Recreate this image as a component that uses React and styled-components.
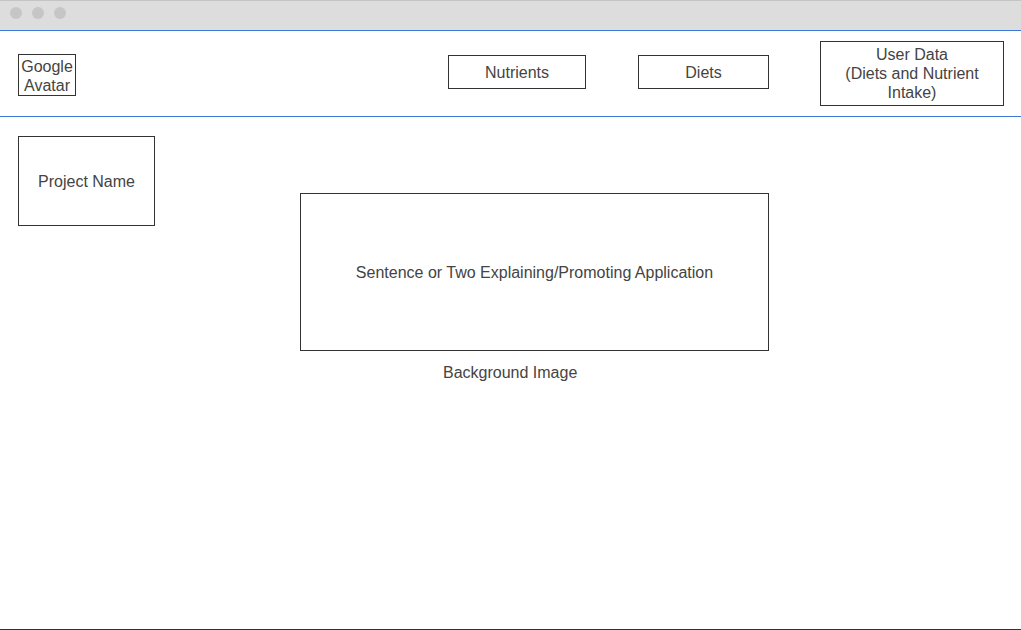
import React from "react";
import styled, { createGlobalStyle } from "styled-components";

const Global = createGlobalStyle`
  html, body { margin: 0; padding: 0; background: #ffffff; }
  * { box-sizing: border-box; }
`;

const Page = styled.div`
  width: 1021px;
  height: 630px;
  display: flex;
  flex-direction: column;
  border-bottom: 1px solid #333333;
  font-family: "Liberation Sans", Arial, sans-serif;
  font-size: 16px;
  line-height: 19px;
  color: #444444;
  background: #ffffff;
  overflow: hidden;
`;

const TitleBar = styled.div`
  height: 31px;
  flex: none;
  display: flex;
  align-items: flex-start;
  gap: 10px;
  padding: 6px 0 0 10px;
  background: #dddddd;
  border-top: 1px solid #c4c4c4;
  border-bottom: 1px solid #3c78d8;
`;

const Dot = styled.span`
  width: 12px;
  height: 12px;
  border-radius: 50%;
  background: #c6c6c6;
`;

const Header = styled.header`
  height: 86px;
  flex: none;
  display: flex;
  align-items: flex-start;
  padding: 0 17px 0 18px;
  border-bottom: 1px solid #3c78d8;
`;

const Nav = styled.nav`
  margin-left: auto;
  display: flex;
  align-items: flex-start;
`;

const Box = styled.div`
  width: ${(p) => p.$w}px;
  height: ${(p) => p.$h}px;
  margin-top: ${(p) => p.$top || 0}px;
  margin-left: ${(p) => p.$left || 0}px;
  padding-top: ${(p) => p.$shift || 0}px;
  border: 1px solid #333333;
  display: flex;
  align-items: center;
  justify-content: center;
  text-align: center;
  flex: none;
`;

const Main = styled.main`
  display: flex;
  align-items: flex-start;
  padding: 19px 0 0 18px;
`;

const HeroColumn = styled.section`
  margin-left: 145px;
  margin-top: 57px;
  display: flex;
  flex-direction: column;
`;

const Caption = styled.div`
  margin-top: 12px;
  margin-left: 143px;
`;

export default function App() {
  return (
    <>
      <Global />
      <Page>
        <TitleBar>
          <Dot />
          <Dot />
          <Dot />
        </TitleBar>
        <Header>
          <Box $w={58} $h={42} $top={23} $shift={2}>
            Google
            <br />
            Avatar
          </Box>
          <Nav>
            <Box $w={138} $h={34} $top={24}>Nutrients</Box>
            <Box $w={131} $h={34} $top={24} $left={52}>Diets</Box>
            <Box $w={184} $h={65} $top={10} $left={51}>
              User Data
              <br />
              (Diets and Nutrient
              <br />
              Intake)
            </Box>
          </Nav>
        </Header>
        <Main>
          <Box $w={137} $h={90}>Project Name</Box>
          <HeroColumn>
            <Box $w={469} $h={158}>
              Sentence or Two Explaining/Promoting Application
            </Box>
            <Caption>Background Image</Caption>
          </HeroColumn>
        </Main>
      </Page>
    </>
  );
}
